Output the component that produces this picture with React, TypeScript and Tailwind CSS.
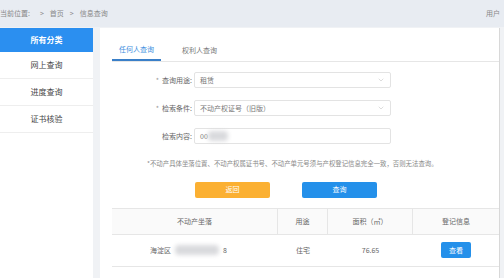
import * as React from "react";
import { ChevronDown } from "lucide-react";

const font = { fontFamily: '"Noto Sans CJK SC", "Noto Sans", sans-serif' };

function Blur({ w }: { w: number }) {
  return (
    <span
      className="inline-block h-[10px] rounded-sm bg-[#d9dadd] blur-[2px]"
      style={{ width: w }}
    />
  );
}

function FormRow({
  label,
  required,
  children,
  select,
}: {
  label: string;
  required?: boolean;
  children: React.ReactNode;
  select?: boolean;
}) {
  return (
    <div className="flex items-center h-[16px]">
      <div className="w-[82px] pr-[2px] text-right text-[7px] text-[#666]">
        {required && <span className="text-[#999] mr-[3px]">*</span>}
        {label}:
      </div>
      <div className="w-[197px] h-[16px] border border-[#e3e3e3] rounded-[2px] flex items-center px-[5px] text-[7px] text-[#777]">
        <div className="flex-1 flex items-center">{children}</div>
        {select && <ChevronDown className="w-[8px] h-[8px] text-[#bbb]" strokeWidth={1.5} />}
      </div>
    </div>
  );
}

export default function App() {
  const menu = ["网上查询", "进度查询", "证书核验"];
  return (
    <div className="w-[504px] h-[278px] bg-[#f0f2f5] flex flex-col overflow-hidden" style={font}>
      <div className="h-[27px] shrink-0 bg-[#e8ecf2] flex items-center justify-between text-[7px] text-[#888]">
        <div className="flex items-center gap-[6px]">
          <span>当前位置:</span>
          <span className="ml-[4px]">&gt;</span>
          <span>首页</span>
          <span>&gt;</span>
          <span>信息查询</span>
        </div>
        <span className="mr-[4px]">用户</span>
      </div>
      <div className="flex flex-1 mt-[1px]">
        <div className="w-[93px] bg-white flex flex-col">
          <div className="h-[24px] bg-[#2b8ff0] text-white text-[8px] font-bold flex items-center justify-center">
            所有分类
          </div>
          {menu.map((m) => (
            <div
              key={m}
              className="h-[27px] border-b border-[#eeeeee] flex items-center justify-center text-[8px] text-[#444]"
            >
              {m}
            </div>
          ))}
        </div>
        <div className="flex-1 ml-[7px] mr-[4px] bg-white border-r border-[#d8d8d8] pl-[12px] pt-[12px]">
          <div className="flex border-b border-[#e6e6e6] h-[22px] text-[7px]">
            <div className="w-[49px] flex items-center justify-center text-[#3d8fe0] border-b-2 border-[#3a7fc8]">
              任何人查询
            </div>
            <div className="ml-[21px] flex items-center text-[#777]">权利人查询</div>
          </div>
          <div className="flex flex-col gap-[12px] mt-[10px]">
            <FormRow label="查询用途" required select>
              租赁
            </FormRow>
            <FormRow label="检索条件" required select>
              不动产权证号（旧版）
            </FormRow>
            <FormRow label="检索内容">
              <span>00</span>
              <Blur w={20} />
            </FormRow>
          </div>
          <div className="mt-[15px] ml-[35px] text-[6.4px] text-[#888] whitespace-nowrap">
            *不动产具体坐落位置、不动产权属证书号、不动产单元号须与产权登记信息完全一致，否则无法查询。
          </div>
          <div className="flex mt-[13px] ml-[83px] gap-[32px]">
            <button className="w-[75px] h-[16px] rounded-[2px] bg-[#fbb032] text-white text-[7px]">
              返回
            </button>
            <button className="w-[75px] h-[16px] rounded-[2px] bg-[#2490ea] text-white text-[7px]">
              查询
            </button>
          </div>
          <div className="mt-[10px] border-t border-[#e6e6e6] text-[7px] text-[#666]">
            <div className="flex h-[26px] bg-[#fafafa] border-b border-[#e6e6e6]">
              <div className="w-[166px] flex items-center justify-center border-r border-[#e6e6e6]">不动产坐落</div>
              <div className="w-[50px] flex items-center justify-center border-r border-[#e6e6e6]">用途</div>
              <div className="w-[85px] flex items-center justify-center border-r border-[#e6e6e6]">面积（㎡）</div>
              <div className="flex-1 flex items-center justify-center">登记信息</div>
            </div>
            <div className="flex h-[32px] border-b border-[#e6e6e6]">
              <div className="w-[166px] flex items-center pl-[38px] gap-[4px]">
                <span>海淀区</span>
                <Blur w={44} />
                <span>8</span>
              </div>
              <div className="w-[50px] flex items-center justify-center">住宅</div>
              <div className="w-[85px] flex items-center justify-center">76.65</div>
              <div className="flex-1 flex items-center justify-center">
                <button className="w-[30px] h-[16px] rounded-[2px] bg-[#2490ea] text-white text-[7px]">
                  查看
                </button>
              </div>
            </div>
          </div>
        </div>
      </div>
    </div>
  );
}
